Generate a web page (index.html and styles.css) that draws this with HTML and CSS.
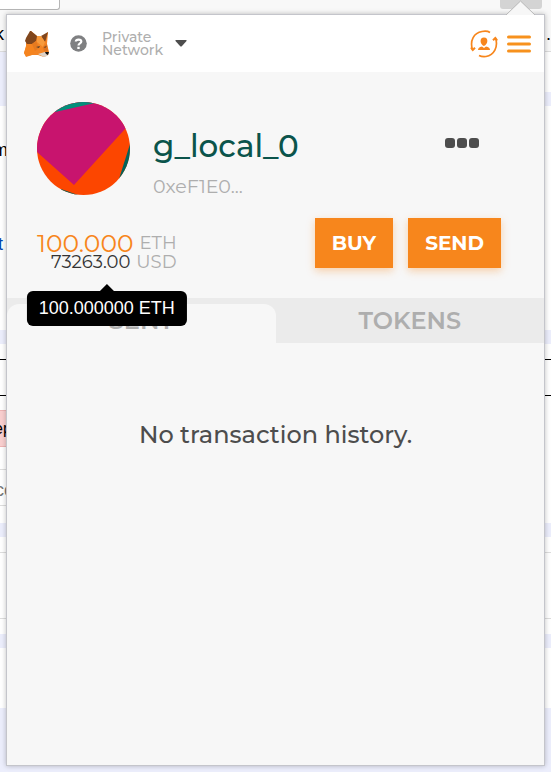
FILE: index.html
```html
<!DOCTYPE html>
<html lang="en">
<head>
<meta charset="utf-8">
<meta name="viewport" content="width=device-width, initial-scale=1">
<title>MetaMask</title>
<link rel="stylesheet" href="styles.css">
</head>
<body>
<div class="page">
  <div class="toolbar"><span class="field"></span><span class="extension"></span></div>
  <div class="heading"><span>k</span><span>...</span></div>
  <div class="band intro"><span></span></div>
  <div class="copy message">m</div>
  <div class="copy link">t</div>
  <div class="band"></div>
  <div class="spacer"></div>
  <div class="outlined"></div>
  <div class="alert"><span>ep</span></div>
  <div class="code"><span>cc</span></div>
  <div class="band"></div>
  <div class="spacer"></div>
  <div class="result"></div>
  <div class="spacer"></div>
  <div class="band"></div>
  <div class="blank"></div>
  <div class="band footer"></div>
</div>

<main class="popup">
  <svg class="pointer" width="30" height="15" viewBox="0 0 30 15" aria-hidden="true"><path d="M0 15 14.500 1 29 15" fill="#f7f7f7" stroke="#b8b8b8"/></svg>
  <header class="bar">
    <svg class="fox" width="27" height="28" viewBox="0 0 27 28" aria-hidden="true">
      <path d="M3 9 8 1 14 6 19 7 25 2 24 14 26 22 25 25 21 27 15 25 9 25 3 27 1 23 3 17Z" fill="#f38424"/>
      <path d="M3 8 7 1 8 1 14 6 13 11 9 14 4 14 2 11Z" fill="#80461d"/>
      <path d="M18 6 25 2 23 9 22 12Z" fill="#80461d"/>
      <path d="M14 6 18 6 22 12 20 17 14 12Z" fill="#f79b3d"/>
      <path d="M3 16 9 14 14 18 9 25 3 26 1 23Z" fill="#f5841f"/>
      <path d="M9 14 13 11 16 18 12 21Z" fill="#e57a20"/>
      <path d="M20 17 24 14 25 22 21 21Z" fill="#df7521"/>
      <path d="M13 17 17 16 16 18Z" fill="#533c2c"/>
      <path d="M21 17 24 16 22 18Z" fill="#533c2c"/>
      <path d="M15 24 22 22 25 23 24 26 21 27Z" fill="#ded3c9"/>
      <path d="M22 22 26 22 25 25 23 24Z" fill="#111"/>
    </svg>
    <button class="network" type="button">
      <svg width="17" height="17" viewBox="0 0 17 17" aria-hidden="true"><circle cx="8.500" cy="8.500" r="8.300" fill="#7f8082"/><path d="M5.800 6.500C6 4.300 11.300 3.500 11.300 6.600 11.300 8.500 8.500 8.400 8.500 10.500" fill="none" stroke="#fff" stroke-width="2.200"/><path d="M7.300 11.800h2.400v2.200H7.300z" fill="#fff"/></svg>
      <span class="network-name">Private<br>Network</span>
      <svg width="12" height="7" viewBox="0 0 12 7" aria-hidden="true"><path d="M1 0H11Q12 0 11.500 1L7 6Q6 7 5 6L.5 1Q0 0 1 0Z" fill="#4d4d4d"/></svg>
    </button>
    <div class="tools">
      <button type="button" aria-label="Switch account"><svg width="28" height="28" viewBox="0 0 28 28" fill="none" stroke="#f7861c" stroke-width="1.700"><path d="M2.500 20C-.5 10 4 3 12 1.500Q17 .5 20 2.500M25.500 8C28.500 17 24 25 16 26.500Q12 27 9 25.500"/><path d="M1 17.500 2.800 20 5 17.800M23 10.200 25.300 8 27.200 10.500" stroke-width="2"/><path d="M14 7.500c5 0 4 7-.1 8.500C10 14.500 9 7.500 14 7.500ZM8 20q0-3 4-3.500l2 1.500 2-1.500q4 .5 4 3.500Z" fill="#f7861c" stroke="none"/></svg></button>
      <button type="button" aria-label="Menu"><svg width="24" height="18" viewBox="0 0 24 18" aria-hidden="true"><path d="M1.500 2h21M1.500 9h21M1.500 16h21" stroke="#f7911d" stroke-width="3" stroke-linecap="round"/></svg></button>
    </div>
  </header>

  <section class="account">
    <div class="identity">
      <svg class="avatar" width="93" height="93" viewBox="0 0 93 93" aria-hidden="true">
        <defs><clipPath id="round"><circle cx="46.500" cy="46.500" r="46.500"/></clipPath></defs>
        <g clip-path="url(#round)"><path d="M0 0H93V93H0Z" fill="#fc4600"/><path d="M0 0H93V25L88 27 37 83 0 50Z" fill="#c8146e"/><path d="M18 10 58 1V0H18Z" fill="#028e7a"/><path d="M93 42 82 77 93 80Z" fill="#02635a"/><path d="M24 87 41 93H24Z" fill="#02635a"/></g>
      </svg>
      <div class="names">
        <h1>g_local_0</h1>
        <div class="address">0xeF1E0...</div>
      </div>
      <button class="more" type="button" aria-label="Account options"><i></i><i></i><i></i></button>
    </div>
    <div class="funds">
      <div class="balance">
        <div class="eth"><span>100.000</span><span class="unit">ETH</span></div>
        <div class="usd"><span>73263.00</span><span class="unit">USD</span></div>
        <div class="tooltip" role="tooltip">100.000000 ETH</div>
      </div>
      <div class="actions">
        <button type="button">BUY</button>
        <button type="button">SEND</button>
      </div>
    </div>
  </section>

  <nav class="tabs">
    <button class="active" type="button">SENT</button>
    <button type="button">TOKENS</button>
  </nav>
  <p class="empty">No transaction history.</p>
</main>
</body>
</html>
```

FILE: styles.css
```css
* { box-sizing: border-box; }
body {
  margin: 0;
  min-height: 100vh;
  position: relative;
  background: #fff;
  font-family: Montserrat, "Liberation Sans", sans-serif;
}
button { border: 0; padding: 0; background: none; font: inherit; color: inherit; cursor: pointer; }
svg { display: block; flex: none; }

/* Host page behind the popup */
.page {
  display: flex;
  flex-direction: column;
  min-height: 100vh;
  overflow: hidden;
  font: 18px/20px "Liberation Sans", sans-serif;
  color: #000;
}
.toolbar { display: flex; justify-content: space-between; height: 10px; padding-right: 9px; background: #f8f8f8; }
.field { width: 60px; background: #fff; border: 1px solid #b6b6b6; border-width: 0 1px 1px 0; border-radius: 0 0 3px 0; }
.extension { width: 42px; height: 9px; background: #d4d4d4; border-radius: 0 0 3px 3px; }
.heading { display: flex; justify-content: space-between; height: 42px; padding-top: 14px; background: #f8f8f8; border-bottom: 1px solid #dcdcdc; }
.heading span:first-child { margin-left: -5px; }
.band { height: 14px; background: #eceefc; }
.intro { display: flex; justify-content: flex-end; height: 54px; }
.intro span { width: 50%; height: 40px; background: #fff; }
.copy { padding-top: 34px; height: 94px; }
.message { margin-left: -7px; }
.link { height: 130px; color: #0645ad; margin-left: -2px; }
.spacer { height: 15px; }
.outlined { height: 37px; border: 1px solid #000; border-width: 1px 0; }
.alert { margin-top: 14px; width: 50%; height: 37px; padding-top: 8px; background: #f9cfcf; border: 1px solid #eeb4b4; border-width: 1px 0; font-size: 16px; }
.alert span { margin-left: -6px; }
.code { width: 50%; height: 37px; margin: 22px 0 17px; padding-top: 10px; border: 1px solid #ddd; border-width: 1px 0; color: #777; }
.code span { margin-left: -5px; }
.result { height: 67px; border: 1px solid #ddd; border-width: 1px 0; }
.blank { height: 60px; }
.footer { flex: 1; }

/* Wallet popup */
.popup {
  position: absolute;
  inset: 14px 6px 6px;
  background: #f7f7f7;
  border: 1px solid #c4c5cb;
  box-shadow: 0 0 5px rgba(0, 0, 0, .25);
}
.pointer { position: absolute; right: 8px; top: -15px; }
.bar { display: flex; align-items: center; height: 57px; padding: 0 13px 0 16px; background: #fff; }
.network { display: flex; align-items: center; margin-left: 20px; text-align: left; }
.network-name { margin: 0 12px 0 15px; color: #aeaeae; font-size: 14px; font-weight: 500; line-height: 13px; }
.tools { display: flex; align-items: center; gap: 9px; margin-left: auto; }

.account { padding: 30px 43px 26px 30px; }
.identity { display: flex; }
.names { margin-left: 23px; padding-top: 26px; }
h1 { margin: 0; color: #0b544b; font-size: 31px; line-height: 36px; font-weight: 500; }
.address { margin-top: 11px; color: #aeaeae; font-size: 19px; line-height: 24px; }
.more { display: flex; gap: 2px; align-self: flex-start; margin: 36px 22px 0 auto; }
.more i { width: 10px; height: 10px; background: #4d4d4d; border-radius: 3px; }
.funds { display: flex; justify-content: space-between; align-items: flex-start; margin-top: 19px; }
.balance { position: relative; padding-top: 16px; color: #333; }
.eth, .usd { display: flex; align-items: center; justify-content: flex-end; gap: 6px; line-height: 19px; }
.eth { color: #f7861c; font-size: 25px; }
.usd { font-size: 18px; }
.unit { color: #aeaeae; font-size: 18px; }
.tooltip {
  position: absolute;
  top: 73px;
  left: 50%;
  transform: translateX(-50%);
  padding: 0 12px;
  border-radius: 6px;
  background: #000;
  color: #fff;
  font: 18px/35px "Liberation Sans", sans-serif;
  white-space: nowrap;
  z-index: 1;
}
.tooltip::before {
  content: "";
  position: absolute;
  left: 50%;
  bottom: 100%;
  margin-left: -7px;
  border: 7px solid transparent;
  border-top: 0;
  border-bottom-color: #000;
}
.actions { display: flex; gap: 15px; }
.actions button {
  height: 50px;
  padding: 0 17px;
  background: #f7861c;
  color: #fff;
  font-size: 20px;
  font-weight: 700;
  box-shadow: 0 3px 8px rgba(247, 134, 28, .35);
}

.tabs { display: flex; height: 45px; background: #ebebeb; }
.tabs button { flex: 1; color: #aeaeae; font-size: 24px; font-weight: 600; }
.tabs .active { margin-top: 6px; padding-bottom: 6px; background: #f7f7f7; border-radius: 12px 12px 0 0; }
.empty { margin: 77px 0 0; text-align: center; color: #4d4d4d; font-size: 24px; line-height: 30px; font-weight: 500; }
```
